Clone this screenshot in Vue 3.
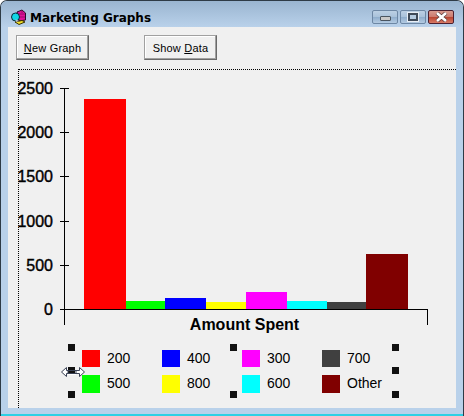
<script setup>
const ticks = [2500, 2000, 1500, 1000, 500, 0]
const bars = [
  { h: 210, w: 42, c: '#ff0000', m: 0 },
  { h: 8, w: 40, c: '#00ff00', m: 0 },
  { h: 11, w: 41, c: '#0000ff', m: -1 },
  { h: 7, w: 41, c: '#ffff00', m: 0 },
  { h: 17, w: 41, c: '#ff00ff', m: -1 },
  { h: 8, w: 40, c: '#00ffff', m: 0 },
  { h: 7, w: 40, c: '#404040', m: 0 },
  { h: 55, w: 42, c: '#800000', m: -1 }
]
const legend = [
  { t: '200', c: '#ff0000' }, { t: '400', c: '#0000ff' }, { t: '300', c: '#ff00ff' }, { t: '700', c: '#404040' },
  { t: '500', c: '#00ff00' }, { t: '800', c: '#ffff00' }, { t: '600', c: '#00ffff' }, { t: 'Other', c: '#800000' }
]
</script>

<template>
  <div class="window">
    <header class="titlebar">
      <svg class="appicon" width="16" height="16" viewBox="0 0 16 16">
        <path d="M7 3 L12 1 L15.5 4 L15.5 11 L9 12 Z" fill="#e0109a" stroke="#2a0a2a" stroke-width="1" />
        <path d="M7 3 L9 12 L7 12 Z" fill="#4a1030" />
        <path d="M12 1 L12 4 M8 5 L15 5 M8 8 L15 8" stroke="#7a0a55" stroke-width="0.7" />
        <circle cx="5.5" cy="8" r="4" fill="#12d6e6" stroke="#0c2a38" stroke-width="1" />
        <path d="M5 13 L12 11.5 L15 13 L9 15.5 Z" fill="#f4e22a" stroke="#3a3000" stroke-width="1" />
        <path d="M5.5 10 L9 12 L6 13 Z" fill="#b8c0c8" />
      </svg>
      <span class="title">Marketing Graphs</span>
      <div class="caption">
        <span class="capbtn"><i class="min"></i></span>
        <span class="capbtn"><i class="max"></i></span>
        <span class="capbtn close">
          <svg width="13" height="10" viewBox="0 0 13 10">
            <path d="M2 1 L11 9 M11 1 L2 9" stroke="#5a3a3a" stroke-width="4" />
            <path d="M2 1 L11 9 M11 1 L2 9" stroke="#fff" stroke-width="2.6" />
          </svg>
        </span>
      </div>
    </header>
    <main class="client">
      <div class="toolbar">
        <button class="btn"><u>N</u>ew Graph</button>
        <button class="btn">Show <u>D</u>ata</button>
      </div>
      <section class="panel">
        <div class="chart">
          <div class="ylabels">
            <span v-for="t in ticks" :key="t" class="ylabel">{{ t }}</span>
          </div>
          <div class="plotcol">
            <div class="plot">
              <div class="tickmarks">
                <i v-for="t in ticks" :key="t" class="tick"></i>
              </div>
              <div
                v-for="b in bars"
                :key="b.c"
                class="bar"
                :style="{ height: b.h + 'px', width: b.w + 'px', marginLeft: b.m + 'px', background: b.c }"
              ></div>
            </div>
            <div class="xarea">Amount Spent</div>
          </div>
        </div>
        <div class="legend">
          <i class="h tl"></i><i class="h ml"></i><i class="h bl"></i>
          <i class="h tc"></i><i class="h bc"></i>
          <i class="h tr"></i><i class="h mr"></i><i class="h br"></i>
          <svg class="cursor" width="24" height="10" viewBox="0 0 24 10">
            <path d="M5.5 3.5 V0.5 L0.5 5 L5.5 9.5 V6.5 H7 V3.5 Z M18.5 3.5 V0.5 L23.5 5 L18.5 9.5 V6.5 H15 V3.5 Z" fill="#fff" stroke="#3a4256" stroke-width="1" />
            <path d="M7 3.5 H15 M7 6.5 H15" stroke="#3a4256" stroke-width="1" />
            <path d="M7 7.5 H15" stroke="#fff" stroke-width="1" />
          </svg>
          <div v-for="l in legend" :key="l.t" class="item">
            <span class="swatch" :style="{ background: l.c }"></span>
            <span class="ltext">{{ l.t }}</span>
          </div>
        </div>
      </section>
    </main>
  </div>
</template>

<style>
html, body { margin: 0; background: #fff; }
</style>

<style scoped>
.window {
  width: 464px;
  height: 416px;
  box-sizing: border-box;
  display: flex;
  flex-direction: column;
  border: 1px solid #2e3b46;
  border-bottom: 0;
  border-radius: 7px 7px 0 0;
  padding: 0 7px 8px;
  background: #b9d1ea;
  box-shadow: inset 0 -2px 0 #2fd0e4;
  overflow: hidden;
  font-family: "Liberation Sans", Arial, sans-serif;
}
.titlebar {
  height: 26px;
  box-sizing: border-box;
  margin: 0 -7px;
  padding: 8px 9px 0 9px;
  display: flex;
  align-items: flex-start;
  gap: 4px;
  flex: none;
  background: linear-gradient(#9ab5d0, #b9d1ea);
}
.appicon { flex: none; }
.title {
  font: bold 12px/16px "DejaVu Sans", sans-serif;
  color: #000;
  margin-top: 1px;
}
.caption { margin-left: auto; display: flex; gap: 2px; margin-top: 1px; }
.capbtn {
  width: 26px;
  height: 14px;
  box-sizing: border-box;
  display: flex;
  align-items: center;
  justify-content: center;
  border: 1px solid #6d87a4;
  border-radius: 2px;
  background: linear-gradient(#bcd0e4 0, #a9c2da 50%, #8fadcc 51%, #b4cbe2 100%);
}
.capbtn .min { width: 9px; height: 3px; margin-top: 3px; background: #c8c8c8; border: 1px solid #4a5560; border-radius: 1px; }
.capbtn .max { width: 6px; height: 4px; background: #b5cbe0; border: 2px solid #3f4a58; outline: 1px solid #e8eef5; }
.capbtn.close {
  border-color: #4c2030;
  background: linear-gradient(#d89a8e 0, #cc7a6e 50%, #b8432f 51%, #d87a66 100%);
}
.client {
  flex: 1;
  min-height: 0;
  display: flex;
  flex-direction: column;
  background: #f0f0f0;
}
.toolbar {
  height: 42px;
  box-sizing: border-box;
  flex: none;
  padding: 8px 8px 0;
  display: flex;
  align-items: flex-start;
  gap: 55px;
}
.btn {
  width: 73px;
  height: 25px;
  padding: 0;
  box-sizing: border-box;
  background: #f0f0f0;
  border: 1px solid;
  border-color: #a0a0a0 #696969 #696969 #a0a0a0;
  box-shadow: inset -1px -1px 0 #a0a0a0, inset 1px 1px 0 #ffffff;
  font: 11px "Liberation Sans", sans-serif;
  letter-spacing: 0.2px;
  color: #000;
}
.panel {
  flex: 1;
  min-height: 0;
  position: relative;
  margin-left: 10px;
  border-top: 1px dotted #000;
  border-left: 1px dotted #000;
  display: flex;
  flex-direction: column;
}
.chart { display: flex; padding-top: 18px; }
.ylabels {
  width: 34px;
  height: 239px;
  margin-top: -8px;
  flex: none;
  display: flex;
  flex-direction: column;
  justify-content: space-between;
  align-items: flex-end;
}
.ylabel { font: 16px/18px "Liberation Sans", sans-serif; height: 18px; -webkit-text-stroke: 0.4px #000; color: #000; }
.plotcol { margin-left: 11px; }
.plot {
  position: relative;
  width: 364px;
  height: 222px;
  box-sizing: border-box;
  border-left: 1px solid #000;
  border-bottom: 1px solid #000;
  padding-left: 19px;
  display: flex;
  align-items: flex-end;
}
.tickmarks {
  position: absolute;
  left: -5px;
  top: 0;
  bottom: -1px;
  width: 9px;
  display: flex;
  flex-direction: column;
  justify-content: space-between;
}
.tick { display: block; height: 1px; background: #000; }
.bar { flex: none; }
.xarea {
  width: 364px;
  height: 15px;
  box-sizing: border-box;
  border-left: 1px solid #000;
  border-right: 1px solid #000;
  text-align: center;
  font: bold 16px/16px "Liberation Sans", sans-serif;
  padding: 7px 3px 0 0;
}
.legend {
  position: relative;
  margin: 25px 0 0 63px;
  width: 320px;
  display: grid;
  grid-template-columns: repeat(4, 80px);
  grid-template-rows: 17px 18px;
  row-gap: 8px;
}
.item { display: flex; align-items: stretch; gap: 7px; }
.swatch { width: 18px; flex: none; }
.ltext { font-size: 14px; line-height: 17px; color: #000; }
.h { position: absolute; width: 7px; height: 7px; background: #111; }
.tl, .tc, .tr { top: -6px; }
.ml, .mr { top: 17px; }
.bl, .bc, .br { top: 41px; }
.tl, .ml, .bl { left: -14px; }
.tc, .bc { left: 148px; }
.tr, .mr, .br { left: 310px; }
.cursor { position: absolute; left: -21px; top: 17px; }
</style>
